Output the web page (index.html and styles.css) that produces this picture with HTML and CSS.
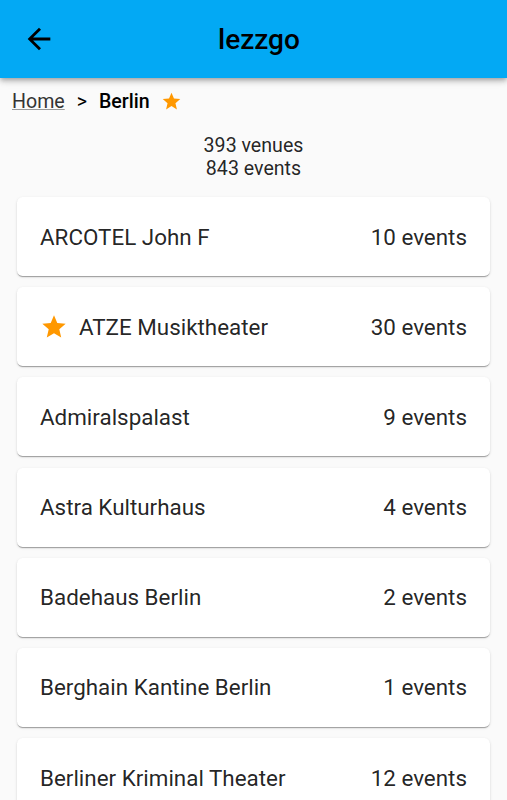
FILE: index.html
```html
<!DOCTYPE html>
<html lang="en">

<head>
    <meta charset="UTF-8">
    <meta name="viewport" content="width=device-width, initial-scale=1.0">
    <title>lezzgo</title>
    <link rel="stylesheet" href="styles.css">
</head>

<body>
    <header class="appbar">
        <button class="appbar_back" type="button" aria-label="Back">
            <svg viewBox="0 0 24 24" width="34" height="34">
                <path d="M20 11H7.83l5.59-5.59L12 4l-8 8 8 8 1.41-1.41L7.83 13H20v-2z" fill="currentColor" />
            </svg>
        </button>
        <h1 class="appbar_title">lezzgo</h1>
    </header>

    <nav class="crumbs">
        <a href="#" class="crumbs_link">Home</a>
        <span class="crumbs_sep">&gt;</span>
        <span class="crumbs_current">Berlin</span>
        <svg class="star star-small" viewBox="0 0 24 24">
            <path d="M12 17.27L18.18 21l-1.64-7.03L22 9.24l-7.19-.61L12 2 9.19 8.63 2 9.24l5.46 4.73L5.82 21z" />
        </svg>
    </nav>

    <div class="summary">
        <div>393 venues</div>
        <div>843 events</div>
    </div>

    <ul class="venues">
        <li class="venue">
            <span class="venue_name">ARCOTEL John F</span>
            <span class="venue_count">10 events</span>
        </li>
        <li class="venue">
            <span class="venue_name">
                <svg class="star star-card" viewBox="0 0 24 24">
                    <path d="M12 17.27L18.18 21l-1.64-7.03L22 9.24l-7.19-.61L12 2 9.19 8.63 2 9.24l5.46 4.73L5.82 21z" />
                </svg>
                ATZE Musiktheater
            </span>
            <span class="venue_count">30 events</span>
        </li>
        <li class="venue">
            <span class="venue_name">Admiralspalast</span>
            <span class="venue_count">9 events</span>
        </li>
        <li class="venue">
            <span class="venue_name">Astra Kulturhaus</span>
            <span class="venue_count">4 events</span>
        </li>
        <li class="venue">
            <span class="venue_name">Badehaus Berlin</span>
            <span class="venue_count">2 events</span>
        </li>
        <li class="venue">
            <span class="venue_name">Berghain Kantine Berlin</span>
            <span class="venue_count">1 events</span>
        </li>
        <li class="venue">
            <span class="venue_name">Berliner Kriminal Theater</span>
            <span class="venue_count">12 events</span>
        </li>
    </ul>
</body>

</html>
```

FILE: styles.css
```css
body {
    margin: 0;
    height: 800px;
    overflow: hidden;
    background: #fafafa;
    font-family: Roboto, "Liberation Sans", sans-serif;
    color: rgba(0, 0, 0, 0.87);
}

.appbar {
    position: relative;
    z-index: 1;
    display: flex;
    align-items: center;
    height: 78px;
    background: #03a9f4;
    box-shadow: 0 2px 4px -1px rgba(0, 0, 0, 0.2), 0 4px 5px 0 rgba(0, 0, 0, 0.14), 0 1px 10px 0 rgba(0, 0, 0, 0.12);
}

.appbar_back {
    display: flex;
    align-items: center;
    justify-content: center;
    width: 78px;
    height: 78px;
    padding: 0;
    border: none;
    background: transparent;
    color: #000;
}

.appbar_title {
    flex: 1;
    margin: 0 0 0 140px;
    font-size: 28px;
    font-weight: 500;
    color: #000;
}

.crumbs {
    display: flex;
    align-items: center;
    padding: 12px 12px 0;
    font-size: 19.6px;
    line-height: 23px;
}

.crumbs_link {
    color: #333;
    text-decoration: underline;
    text-decoration-color: #999;
}

.crumbs_sep {
    margin: 0 12px 0 12px;
    color: #000;
}

.crumbs_current {
    font-weight: 500;
    color: #000;
}

.star {
    fill: #ff9800;
}

.star-small {
    width: 21px;
    height: 21px;
    margin-left: 11px;
}

.summary {
    margin-top: 21px;
    text-align: center;
    font-size: 19.6px;
    line-height: 23px;
}

.venues {
    display: flex;
    flex-direction: column;
    gap: 11.2px;
    list-style: none;
    margin: 17px 17px 0;
    padding: 0;
}

.venue {
    display: flex;
    flex-shrink: 0;
    align-items: center;
    justify-content: space-between;
    height: 79px;
    padding: 0 23px;
    background: #fff;
    border-radius: 5.6px;
    box-shadow: 0 2px 1px -1px rgba(0, 0, 0, 0.2), 0 1px 1px 0 rgba(0, 0, 0, 0.14), 0 1px 3px 0 rgba(0, 0, 0, 0.12);
    font-size: 22.4px;
}

.venue_name {
    display: flex;
    align-items: center;
}

.star-card {
    width: 28px;
    height: 28px;
    margin-right: 11px;
}
```
